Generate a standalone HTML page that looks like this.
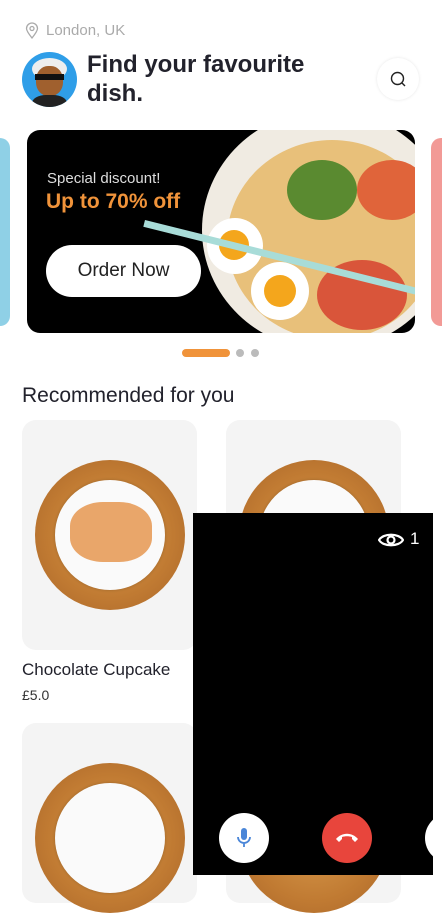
<!DOCTYPE html><html><head><style>
body{margin:0;width:442px;height:885px;overflow:hidden;background:#fff;font-family:"Liberation Sans",sans-serif;position:relative}
.a{position:absolute}
.card{position:absolute;background:#f4f4f4;border-radius:14px}
.mat{position:absolute;border-radius:50%;background:radial-gradient(circle,#d89a4c 0,#c07a32 60%,#a8652a 100%)}
.plate{position:absolute;border-radius:50%;background:#fafafa;box-shadow:0 0 3px rgba(0,0,0,.2)}
</style></head><body>
<svg class="a" style="left:24px;top:22px" width="16" height="18" viewBox="0 0 16 18"><path d="M8 16C4 11 2.5 8.5 2.5 6.5a5.5 5.5 0 0111 0c0 2-1.5 4.5-5.5 9.5z" fill="none" stroke="#aaa" stroke-width="1.3"/><circle cx="8" cy="6.5" r="2" fill="none" stroke="#aaa" stroke-width="1.3"/></svg>
<div class="a" style="left:46px;top:22px;font-size:15px;color:#aaa">London, UK</div>
<div class="a" style="left:22px;top:52px;width:55px;height:55px;border-radius:50%;background:#2f9ee8;overflow:hidden">
<div class="a" style="left:10px;top:6px;width:35px;height:22px;border-radius:50%;background:#eee"></div>
<div class="a" style="left:14px;top:14px;width:27px;height:30px;border-radius:45%;background:#a0602e"></div>
<div class="a" style="left:13px;top:22px;width:29px;height:6px;background:#111"></div>
<div class="a" style="left:10px;top:43px;width:35px;height:20px;border-radius:40% 40% 0 0;background:#222"></div></div>
<div class="a" style="left:87px;top:50px;font-size:24px;font-weight:bold;color:#22222c;line-height:29px">Find your favourite<br>dish.</div>
<div class="a" style="left:377px;top:58px;width:42px;height:42px;border-radius:50%;background:#fff;box-shadow:0 0 3px rgba(0,0,0,.1)"></div>
<svg class="a" style="left:390px;top:71px" width="17" height="17" viewBox="0 0 17 17"><circle cx="7.5" cy="7.5" r="6" fill="none" stroke="#222" stroke-width="1.4"/><path d="M12 12l3 3" stroke="#222" stroke-width="1.4"/></svg>
<div class="a" style="left:-10px;top:138px;width:20px;height:188px;border-radius:10px;background:#8fd0e6"></div>
<div class="a" style="left:431px;top:138px;width:30px;height:188px;border-radius:10px;background:#f29a96"></div>
<div class="a" style="left:27px;top:130px;width:388px;height:203px;border-radius:13px;background:#000;overflow:hidden">
<div class="a" style="left:175px;top:-20px;width:250px;height:240px;border-radius:50%;background:#f0ebe2"></div>
<div class="a" style="left:200px;top:10px;width:210px;height:200px;border-radius:50%;background:#e8c07a"></div>
<div class="a" style="left:330px;top:30px;width:70px;height:60px;border-radius:50%;background:#e0643a"></div>
<div class="a" style="left:290px;top:130px;width:90px;height:70px;border-radius:50%;background:#d9553a"></div>
<div class="a" style="left:260px;top:30px;width:70px;height:60px;border-radius:50%;background:#5a8a30"></div>
<div class="a" style="left:180px;top:88px;width:56px;height:56px;border-radius:50%;background:#fff"><div class="a" style="left:12px;top:12px;width:30px;height:30px;border-radius:50%;background:#f4a61c"></div></div>
<div class="a" style="left:224px;top:132px;width:58px;height:58px;border-radius:50%;background:#fff"><div class="a" style="left:13px;top:13px;width:32px;height:32px;border-radius:50%;background:#f4a61c"></div></div>
<div class="a" style="left:118px;top:90px;width:290px;height:7px;background:#a8dcd8;transform:rotate(14deg);transform-origin:0 0"></div>
<div class="a" style="left:20px;top:40px;font-size:15px;color:#ddd">Special discount!</div>
<div class="a" style="left:19px;top:60px;font-size:21px;font-weight:bold;color:#f0933a">Up to 70% off</div>
<div class="a" style="left:19px;top:115px;width:155px;height:52px;border-radius:26px;background:#fff;text-align:center;line-height:52px;font-size:19px;color:#222">Order Now</div></div>
<div class="a" style="left:182px;top:349px;width:48px;height:8px;border-radius:4px;background:#f0933a"></div>
<div class="a" style="left:236px;top:349px;width:8px;height:8px;border-radius:50%;background:#bbb"></div>
<div class="a" style="left:251px;top:349px;width:8px;height:8px;border-radius:50%;background:#bbb"></div>
<div class="a" style="left:22px;top:384px;font-size:21px;color:#22222c">Recommended for you</div>
<div class="card" style="left:22px;top:420px;width:175px;height:230px"><div class="mat" style="left:13px;top:40px;width:150px;height:150px"></div><div class="plate" style="left:33px;top:60px;width:110px;height:110px"></div><div class="a" style="left:48px;top:82px;width:82px;height:60px;border-radius:40%;background:#e9a66a"></div></div>
<div class="card" style="left:226px;top:420px;width:175px;height:230px"><div class="mat" style="left:13px;top:40px;width:150px;height:150px"></div><div class="plate" style="left:33px;top:60px;width:110px;height:110px"></div></div>
<div class="a" style="left:22px;top:660px;font-size:17px;color:#22222c">Chocolate Cupcake</div>
<div class="a" style="left:22px;top:687px;font-size:14px;color:#333">£5.0</div>
<div class="card" style="left:22px;top:723px;width:175px;height:180px"><div class="mat" style="left:13px;top:40px;width:150px;height:150px"></div><div class="plate" style="left:33px;top:60px;width:110px;height:110px"></div></div>
<div class="card" style="left:226px;top:723px;width:175px;height:180px"><div class="mat" style="left:13px;top:40px;width:150px;height:150px"></div></div>
<div class="a" style="left:193px;top:513px;width:240px;height:362px;background:#000;overflow:hidden">
<svg class="a" style="left:185px;top:18px" width="26" height="18" viewBox="0 0 26 18"><path d="M1 9C5 2 21 2 25 9C21 16 5 16 1 9z" fill="none" stroke="#fff" stroke-width="2.2"/><circle cx="13" cy="9" r="3.5" fill="none" stroke="#fff" stroke-width="2.2"/></svg>
<div class="a" style="left:217px;top:16px;color:#fff;font-size:17px">1</div>
<div class="a" style="left:26px;top:300px;width:50px;height:50px;border-radius:50%;background:#fff"><svg class="a" style="left:17px;top:14px" width="16" height="22" viewBox="0 0 16 22"><rect x="5" y="1" width="6" height="12" rx="3" fill="#4a86d8"/><path d="M2 10a6 6 0 0012 0M8 16v4" stroke="#4a86d8" stroke-width="1.8" fill="none"/></svg></div>
<div class="a" style="left:129px;top:300px;width:50px;height:50px;border-radius:50%;background:#e8453c"><svg class="a" style="left:12px;top:18px" width="26" height="12" viewBox="0 0 26 12"><path d="M2 8C8 1 18 1 24 8l-3 3-3-3v-2c-3-1-7-1-10 0v2l-3 3z" fill="#fff"/></svg></div>
<div class="a" style="left:232px;top:300px;width:50px;height:50px;border-radius:50%;background:#fff"></div></div>
</body></html>
